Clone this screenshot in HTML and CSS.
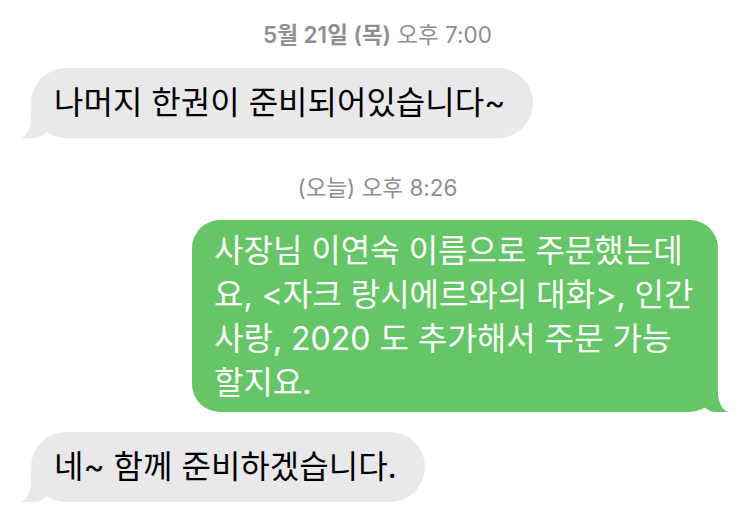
FILE: index.html
```html
<!DOCTYPE html>
<html lang="ko">
<head>
<meta charset="utf-8">
<link rel="stylesheet" href="styles.css">
</head>
<body>
<div class="thread">
  <div class="stamp first"><b>5월 21일 (목)</b> 오후 7:00</div>
  <div class="row in">
    <div class="bubble gray">나머지 한권이 준비되어있습니다~</div>
  </div>
  <div class="stamp second">(오늘) 오후 8:26</div>
  <div class="row out">
    <div class="bubble green">사장님 이연숙 이름으로 주문했는데<br>요, &lt;자크 랑시에르와의 대화&gt;, 인간<br>사랑, 2020 도 추가해서 주문 가능<br>할지요.</div>
  </div>
  <div class="row in last">
    <div class="bubble gray">네~ 함께 준비하겠습니다.</div>
  </div>
</div>
</body>
</html>
```
FILE: styles.css
```css
html, body {
  margin: 0;
  padding: 0;
  background: #ffffff;
}

.thread {
  padding: 0 31px;
  display: flex;
  flex-direction: column;
  font-family: Inter, "Noto Sans CJK KR", sans-serif;
}

.stamp {
  font-size: 22.5px;
  line-height: 24px;
  color: #8e8e93;
  text-align: center;
  padding-left: 6px;
}

.stamp b {
  font-weight: 600;
}

.stamp.first {
  margin-top: 23px;
}

.stamp.second {
  margin-top: 38px;
}

.row {
  display: flex;
}

.row.in {
  justify-content: flex-start;
  margin-top: 21px;
}

.row.out {
  justify-content: flex-end;
  margin-top: 20px;
}

.row.in.last {
  margin-top: 20px;
}

.bubble {
  position: relative;
  font-size: 32px;
  line-height: 44px;
  white-space: nowrap;
}

.gray {
  background: #e9e9eb;
  color: #000000;
  border-radius: 35px;
  padding: 13px 28px 13px 23px;
}

.green {
  background: #66c667;
  color: #ffffff;
  border-radius: 28px;
  padding: 9px 20px 7px 22px;
  width: 484px;
}

.gray::before,
.gray::after,
.green::before,
.green::after {
  content: "";
  position: absolute;
  bottom: 0;
  height: 30px;
}

.gray::before {
  left: -11px;
  width: 28px;
  background: #e9e9eb;
  border-bottom-right-radius: 14px 12px;
}

.gray::after {
  left: -30px;
  width: 30px;
  background: #ffffff;
  border-bottom-right-radius: 12px 20px;
}

.green::before {
  right: -12px;
  width: 28px;
  background: #66c667;
  border-bottom-left-radius: 14px 12px;
}

.green::after {
  right: -30px;
  width: 30px;
  background: #ffffff;
  border-bottom-left-radius: 12px 20px;
}
```
